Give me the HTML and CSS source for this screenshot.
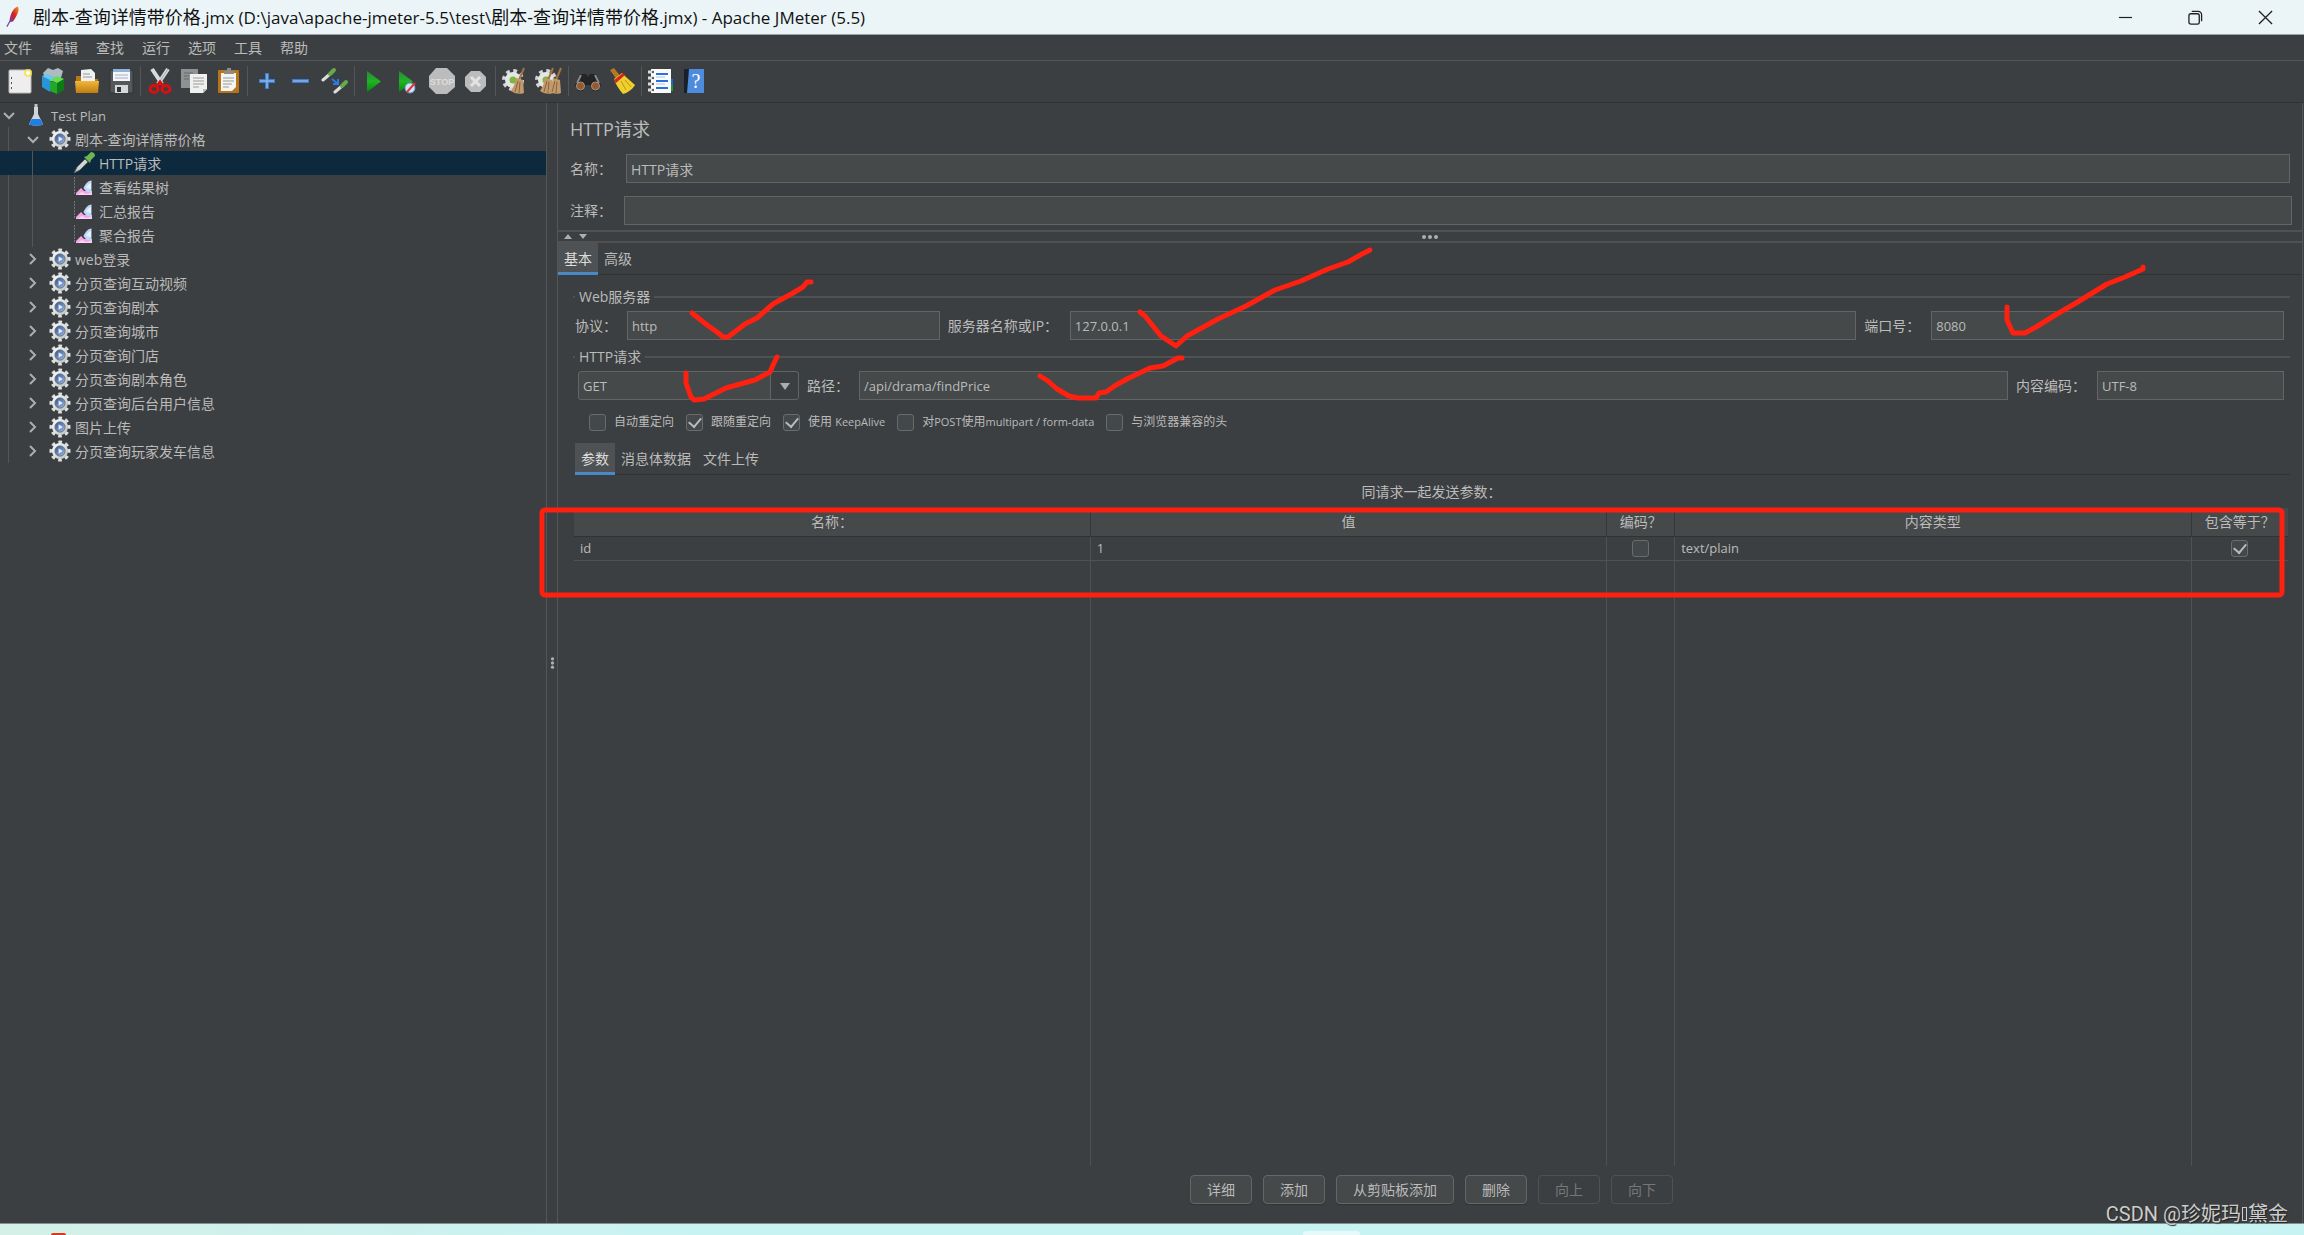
FILE: index.html
```html
<!DOCTYPE html>
<html lang="zh-CN">
<head>
<meta charset="utf-8">
<title>Apache JMeter (5.5)</title>
<link rel="stylesheet" href="styles.css">
</head>
<body>
<svg class="defs" aria-hidden="true">
  <defs>
    <linearGradient id="silver" x1="0" y1="0" x2="1" y2="1"><stop offset="0" stop-color="#fff"/><stop offset="1" stop-color="#b9bcbe"/></linearGradient>
    <linearGradient id="blue" x1="0" y1="0" x2="1" y2="1"><stop offset="0" stop-color="#2f4f8c"/><stop offset="1" stop-color="#9dbbe6"/></linearGradient>
    <linearGradient id="green" x1="0" y1="0" x2="0" y2="1"><stop offset="0" stop-color="#2b8a35"/><stop offset=".5" stop-color="#1fb325"/><stop offset="1" stop-color="#078a08"/></linearGradient>
    <linearGradient id="gold" x1="0" y1="0" x2="0" y2="1"><stop offset="0" stop-color="#f0b83c"/><stop offset="1" stop-color="#c17d10"/></linearGradient>
    <linearGradient id="feather" x1="1" y1="0" x2="0" y2="1"><stop offset="0" stop-color="#f69923"/><stop offset=".5" stop-color="#d22128"/><stop offset="1" stop-color="#6d3f9c"/></linearGradient>
  </defs>
  <symbol id="gear" viewBox="0 0 24 24">
    <circle cx="12" cy="12" r="9.5" fill="none" stroke="#dedfe0" stroke-width="4" stroke-dasharray="3.8 3.66" transform="rotate(-12 12 12)"/>
    <circle cx="12" cy="12" r="8.7" fill="url(#silver)"/>
    <circle cx="12" cy="12" r="5.6" fill="url(#blue)" stroke="#6e7680" stroke-width="1"/>
    <path d="M10.500 9l4.500 3-4.500 3z" fill="#e7effa"/>
  </symbol>
  <symbol id="chart" viewBox="0 0 22 22">
    <path d="M1.500 1v18" fill="none" stroke="#777" stroke-width="1" stroke-dasharray="2 1"/>
    <path d="M3 19v-2l5-5 3 3h8v4z" fill="#f4a6e6"/>
    <path d="M10.500 12c2-4 4-7 8-7.500V17c-3-1-6-1-8-5z" fill="#bcd8fa"/><path d="M13 12c1-3 3-4 5-5v6z" fill="#e6f1fd"/><path d="M4 19l5-3 4 2 6-1v2z" fill="#fbd3f4"/>
  </symbol>
  <symbol id="broomlet" viewBox="0 0 16 28">
    <path d="M14 1L9 13" stroke="#a0753f" stroke-width="2"/><path d="M6 11l7 2 1 13c-5 2-10 0-13-2 2-3 4-7 5-13z" fill="#c09a6c"/><path d="M8 14L5 25M10 15L9 26" stroke="#8a6338"/>
  </symbol>
  <symbol id="cog" viewBox="0 0 24 24">
    <circle cx="12" cy="12" r="9" fill="none" stroke="#d5d7d7" stroke-width="4" stroke-dasharray="3.6 3.47"/><circle cx="12" cy="12" r="8" fill="#e4e5e5"/><circle cx="12" cy="12" r="3.5" fill="#79b83a"/>
  </symbol>
  <symbol id="open" viewBox="0 0 12 12"><path d="M1 4l5 5 5-5" fill="none" stroke="#adadad" stroke-width="2"/></symbol>
  <symbol id="closed" viewBox="0 0 12 12"><path d="M3 1l5 5-5 5" fill="none" stroke="#adadad" stroke-width="2"/></symbol>
</svg>

<div class="window">
  <header class="titlebar">
    <svg class="logo" viewBox="0 0 16 26"><path d="M13 1c3 2 1 9-5 17l-4 1C4 11 8 3 13 1z" fill="url(#feather)"/><path d="M5 17l-4 7" stroke="#7b4da0" stroke-width="1.500"/></svg>
    <h1>剧本-查询详情带价格<span>.jmx (D:\java\apache-jmeter-5.5\test\</span>剧本-查询详情带价格<span>.jmx) - Apache JMeter (5.5)</span></h1>
    <button class="winbtn" aria-label="最小化"><svg viewBox="0 0 16 16"><path d="M1 8h14" stroke="#222" stroke-width="1.300"/></svg></button>
    <button class="winbtn" aria-label="还原"><svg viewBox="0 0 16 16" fill="none" stroke="#222" stroke-width="1.400"><rect x="1" y="4" width="11" height="11" rx="2"/><path d="M4 1.500h7a3.500 3.500 0 0 1 3.500 3.500v7"/></svg></button>
    <button class="winbtn" aria-label="关闭"><svg viewBox="0 0 16 16"><path d="M1 1l14 14M15 1L1 15" stroke="#222" stroke-width="1.400"/></svg></button>
  </header>

  <nav class="menubar">
    <button>文件</button><button>编辑</button><button>查找</button><button>运行</button><button>选项</button><button>工具</button><button>帮助</button>
  </nav>

  <div class="toolbar">
    <button aria-label="新建"><svg viewBox="0 0 28 28"><rect x="4" y="3" width="22" height="23" rx="1" fill="#eee" stroke="#bbb"/><path d="M6.500 10v2M6.500 15v2M6.500 20v2" stroke="#555"/><circle cx="23" cy="6" r="4" fill="#f6e34e" opacity=".85"/><circle cx="23" cy="6" r="2" fill="#fff"/></svg></button>
    <button aria-label="模板"><svg viewBox="0 0 28 28"><path d="M4 6l5-5 5 2 5-2 5 3-3 10H8z" fill="#aebcbf"/><path d="M3 9l8 3v13l-8-5z" fill="#2795d8"/><path d="M3 9l5-2 8 3-5 3z" fill="#68c6f2"/><path d="M11 14l7 2v11l-7-3z" fill="#24a82c"/><path d="M18 16l7-4v11l-7 4z" fill="#0a7a12"/><path d="M11 13l7-4 7 3-7 4z" fill="#66dc50"/></svg></button>
    <button aria-label="打开"><svg viewBox="0 0 28 28"><path d="M3 9h6l2 3h14v13H3z" fill="#b67a14"/><path d="M8 3l10-1 4 4v12H8z" fill="#eef0f2"/><path d="M10 7h7M10 10h9" stroke="#999"/><path d="M2 14h24l-1 12H3z" fill="url(#gold)"/></svg></button>
    <button aria-label="保存"><svg viewBox="0 0 28 28"><path d="M3 3h22l1 2v21H3z" fill="#55585b" stroke="#333"/><path d="M6 2h17v12H6z" fill="#f3f7fb"/><path d="M6 2h17v3H6z" fill="#8eb4dc"/><path d="M8 8h13M8 11h13" stroke="#aab"/><path d="M8 18h13v8H8z" fill="#d5d7d8"/><path d="M10 20h4v5h-4z" fill="#333"/></svg></button>
    <i class="sep"></i>
    <button aria-label="剪切"><svg viewBox="0 0 28 28"><path d="M6 2l10 15M22 2L12 17" stroke="#dadada" stroke-width="4"/><path d="M22 2L12 17" stroke="#a5a8aa" stroke-width="1"/><ellipse cx="8" cy="22" rx="4" ry="3.500" fill="none" stroke="#d90f12" stroke-width="3"/><ellipse cx="20" cy="22" rx="4" ry="3.500" fill="none" stroke="#d90f12" stroke-width="3"/><path d="M11 19l3-4 3 4" fill="none" stroke="#d90f12" stroke-width="3"/></svg></button>
    <button aria-label="复制"><svg viewBox="0 0 28 28"><path d="M1 2h17v19H1z" fill="#8f9292"/><path d="M4 6h9M4 9h5M4 12h5" stroke="#686b6b"/><path d="M10 7h17v15l-4 4H10z" fill="#f0f0ef"/><path d="M13 11h11M13 14h11M13 17h11M13 20h6" stroke="#9a9a9a"/><path d="M27 22h-4v4z" fill="#bbb"/></svg></button>
    <button aria-label="粘贴"><svg viewBox="0 0 28 28"><rect x="4" y="3" width="21" height="23" rx="1" fill="#b7741a"/><path d="M7 6h15v14l-4 4H7z" fill="#f4f4f2"/><path d="M9 11h11M9 14h11M9 17h9M9 20h6" stroke="#999"/><path d="M10 7V4h3V1h4v3h3v3z" fill="#8b8e87"/></svg></button>
    <i class="sep"></i>
    <button aria-label="展开"><svg viewBox="0 0 28 28"><path d="M14 6v16M6 14h16" stroke="#3b7bd0" stroke-width="4"/><path d="M14 7v14M7 14h14" stroke="#8cb6ea" stroke-width="1.500"/></svg></button>
    <button aria-label="折叠"><svg viewBox="0 0 28 28"><path d="M5 14h17" stroke="#3b7bd0" stroke-width="4"/><path d="M6 14h15" stroke="#8cb6ea" stroke-width="1.500"/></svg></button>
    <button aria-label="切换"><svg viewBox="0 0 28 28"><path d="M2 13l7-6M14 25l7-6" stroke="#ddd" stroke-width="3" stroke-linecap="round"/><path d="M9 7l4-4M21 19l4-4" stroke="#65a94b" stroke-width="4" stroke-linecap="round"/><path d="M11 12l6 5m0-5v5h-5" fill="none" stroke="#2d78e4" stroke-width="2"/></svg></button>
    <i class="sep"></i>
    <button aria-label="启动"><svg viewBox="0 0 28 28"><path d="M7 4l14 10.500L7 25z" fill="url(#green)"/></svg></button>
    <button aria-label="无停顿启动"><svg viewBox="0 0 28 28"><path d="M5 4l14 10.500L5 25z" fill="url(#green)"/><circle cx="16" cy="21" r="5" fill="#cfe3f8" stroke="#6b99ce"/><path d="M13 25l8-9" stroke="#d33" stroke-width="2"/></svg></button>
    <button aria-label="停止"><svg viewBox="0 0 28 28"><path d="M8 1h11l8 8v11l-8 7H8l-7-7V9z" fill="#bcbcbc"/><text x="14" y="18" class="stoptext">STOP</text></svg></button>
    <button aria-label="关闭"><svg viewBox="0 0 28 28"><path d="M9 4h9l6 6v9l-6 6H9l-6-6v-9z" fill="#bcbcbc"/><path d="M9 10l9 9M18 10l-9 9" stroke="#e3e3e3" stroke-width="3"/></svg></button>
    <i class="sep"></i>
    <button aria-label="清除"><svg viewBox="0 0 28 28"><use href="#cog" x="0" y="1" width="24" height="24"/><use href="#broomlet" x="9" y="0" width="16" height="28"/></svg></button>
    <button aria-label="清除全部"><svg viewBox="0 0 28 28"><use href="#cog" x="-1" y="1" width="24" height="24"/><use href="#broomlet" x="4" y="0" width="16" height="28"/><use href="#broomlet" x="12" y="0" width="16" height="28"/></svg></button>
    <i class="sep"></i>
    <button aria-label="搜索"><svg viewBox="0 0 28 28"><path d="M6 7h6l2 3 2-3h6l5 11-3 6h-5l-3-6h-4l-3 6H4l-3-6z" fill="#242424"/><path d="M7 8l-4 8M21 8l4 8" stroke="#888" stroke-width="2"/><circle cx="6.500" cy="19" r="4" fill="#9a5828" stroke="#999"/><circle cx="21.500" cy="19" r="4" fill="#9a5828" stroke="#999"/></svg></button>
    <button aria-label="重置搜索"><svg viewBox="0 0 28 28"><path d="M2 3l4-2 7 9-4 3z" fill="#b57921"/><path d="M6 12l8-6 4 4c3 3 6 5 9 8-3 5-8 8-12 9-4-5-7-9-9-15z" fill="#efcf2c"/><path d="M6 13l9-7 2 2-9 8z" fill="#d32421"/><path d="M13 14l5 9M17 13l6 7" stroke="#b9961a"/></svg></button>
    <i class="sep"></i>
    <button aria-label="函数助手"><svg viewBox="0 0 28 28"><path d="M22 12h4v6h-4z" fill="#1b66d8"/><path d="M22 18h4v6h-4z" fill="#1a9a2b"/><rect x="4" y="2" width="20" height="24" fill="#fafafa"/><path d="M9 7h12M9 14h12M9 21h12" stroke="#2c70dd" stroke-width="2"/><path d="M9 10h9M9 17h9" stroke="#aac6ef"/><path d="M1 5h6M1 11h6M1 17h6M1 23h6" stroke="#ddd" stroke-width="3"/><circle cx="6" cy="5" r="1" fill="#333"/><circle cx="6" cy="11" r="1" fill="#333"/><circle cx="6" cy="17" r="1" fill="#333"/><circle cx="6" cy="23" r="1" fill="#333"/></svg></button>
    <button aria-label="帮助"><svg viewBox="0 0 28 28"><path d="M3 2h20v24H3z" fill="#4f8bdd"/><path d="M3 2h5L6 26H3z" fill="#17202b"/><text x="15" y="21" class="helptext">?</text></svg></button>
  </div>

  <main class="workspace">
    <aside class="tree">
      <ul>
        <li>
          <div class="node"><svg class="twisty"><use href="#open"/></svg><svg class="icon" viewBox="0 0 22 22"><path d="M11 0v9" stroke="#bfc4c8" stroke-width="3"/><path d="M9 3h4v7l5 10c0 2-14 2-14 0L9 10z" fill="#cfd6dc"/><path d="M7 15h8l3 5c0 2-14 2-14 0z" fill="#1f7de6"/></svg><span class="latin">Test Plan</span></div>
          <ul>
            <li>
              <div class="node"><svg class="twisty"><use href="#open"/></svg><svg class="icon"><use href="#gear"/></svg><span>剧本-查询详情带价格</span></div>
              <ul>
                <li><div class="node selected"><i class="twisty"></i><svg class="icon" viewBox="0 0 22 22"><path d="M1 21l3-6 8-8 3 3-8 8z" fill="#ccd3d0" stroke="#555"/><path d="M11 5l6 6 1-3 4-4c0-3-2-4-4-4l-4 4z" fill="#6fb552"/></svg><span>HTTP请求</span></div></li>
                <li><div class="node"><i class="twisty"></i><svg class="icon"><use href="#chart"/></svg><span>查看结果树</span></div></li>
                <li><div class="node"><i class="twisty"></i><svg class="icon"><use href="#chart"/></svg><span>汇总报告</span></div></li>
                <li><div class="node"><i class="twisty"></i><svg class="icon"><use href="#chart"/></svg><span>聚合报告</span></div></li>
              </ul>
            </li>
            <li><div class="node"><svg class="twisty"><use href="#closed"/></svg><svg class="icon"><use href="#gear"/></svg><span>web登录</span></div></li>
            <li><div class="node"><svg class="twisty"><use href="#closed"/></svg><svg class="icon"><use href="#gear"/></svg><span>分页查询互动视频</span></div></li>
            <li><div class="node"><svg class="twisty"><use href="#closed"/></svg><svg class="icon"><use href="#gear"/></svg><span>分页查询剧本</span></div></li>
            <li><div class="node"><svg class="twisty"><use href="#closed"/></svg><svg class="icon"><use href="#gear"/></svg><span>分页查询城市</span></div></li>
            <li><div class="node"><svg class="twisty"><use href="#closed"/></svg><svg class="icon"><use href="#gear"/></svg><span>分页查询门店</span></div></li>
            <li><div class="node"><svg class="twisty"><use href="#closed"/></svg><svg class="icon"><use href="#gear"/></svg><span>分页查询剧本角色</span></div></li>
            <li><div class="node"><svg class="twisty"><use href="#closed"/></svg><svg class="icon"><use href="#gear"/></svg><span>分页查询后台用户信息</span></div></li>
            <li><div class="node"><svg class="twisty"><use href="#closed"/></svg><svg class="icon"><use href="#gear"/></svg><span>图片上传</span></div></li>
            <li><div class="node"><svg class="twisty"><use href="#closed"/></svg><svg class="icon"><use href="#gear"/></svg><span>分页查询玩家发车信息</span></div></li>
          </ul>
        </li>
      </ul>
    </aside>

    <div class="divider"><svg viewBox="0 0 6 14"><g fill="#adadad"><circle cx="3" cy="2" r="2"/><circle cx="3" cy="7" r="2"/><circle cx="3" cy="12" r="2"/></g></svg></div>

    <section class="editor">
      <div class="head">
        <h2>HTTP请求</h2>
        <div class="field"><label for="name">名称：</label><input id="name" class="mixed" value="HTTP请求"></div>
        <div class="field comment"><label for="comment">注释：</label><input id="comment"></div>
      </div>
      <div class="splitter">
        <svg class="arrows" viewBox="0 0 24 6"><path d="M0 5l4-5 4 5zM15 0h8l-4 5z" fill="#adadad"/></svg>
        <svg class="dots" viewBox="0 0 16 6"><g fill="#adadad"><circle cx="2" cy="3" r="2"/><circle cx="8" cy="3" r="2"/><circle cx="14" cy="3" r="2"/></g></svg>
      </div>
      <div class="tabs"><button class="on">基本</button><button>高级</button></div>

      <div class="body">
        <fieldset>
          <legend>Web服务器</legend>
          <div class="row server">
            <label for="proto">协议：</label><input id="proto" value="http">
            <label for="host">服务器名称或IP：</label><input id="host" value="127.0.0.1">
            <label for="port">端口号：</label><input id="port" value="8080">
          </div>
        </fieldset>
        <fieldset>
          <legend>HTTP请求</legend>
          <div class="row request">
            <div class="combo"><select aria-label="方法"><option>GET</option><option>POST</option></select><svg viewBox="0 0 10 8"><path d="M0 1h10L5 8z" fill="#adadad"/></svg></div>
            <label for="path">路径：</label><input id="path" value="/api/drama/findPrice">
            <label for="enc">内容编码：</label><input id="enc" value="UTF-8">
          </div>
          <div class="checks">
            <label><input type="checkbox"><span>自动重定向</span></label>
            <label><input type="checkbox" checked><span>跟随重定向</span></label>
            <label><input type="checkbox" checked><span>使用 <small>KeepAlive</small></span></label>
            <label><input type="checkbox"><span>对<small>POST</small>使用<small>multipart / form-data</small></span></label>
            <label><input type="checkbox"><span>与浏览器兼容的头</span></label>
          </div>
        </fieldset>

        <div class="tabs inner"><button class="on">参数</button><button>消息体数据</button><button>文件上传</button></div>
        <div class="caption" id="cap">同请求一起发送参数：</div>
        <div class="grid">
          <table aria-labelledby="cap">
            <colgroup><col><col><col class="c-enc"><col><col class="c-eq"></colgroup>
            <thead><tr><th>名称：</th><th>值</th><th>编码？</th><th>内容类型</th><th>包含等于？</th></tr></thead>
            <tbody>
              <tr class="data"><td>id</td><td>1</td><td class="mid"><input type="checkbox" aria-label="编码"></td><td>text/plain</td><td class="mid"><input type="checkbox" checked aria-label="包含等于"></td></tr>
              <tr class="fill"><td></td><td></td><td></td><td></td><td></td></tr>
            </tbody>
          </table>
        </div>
        <div class="actions">
          <button>详细</button><button>添加</button><button>从剪贴板添加</button><button>删除</button><button disabled>向上</button><button disabled>向下</button>
        </div>
      </div>
    </section>
  </main>
  <footer class="taskbar"><i class="app"></i><i class="pill"></i></footer>
</div>

<svg class="marks" aria-hidden="true">
  <rect x="542" y="510" width="1740" height="85" rx="3"/>
  <path d="M692 313L707 325 717 332 723 337 728 337 745 324 757 318 773 304 793 293 803 287 807 282 811 282"/>
  <path d="M1140 312L1145 316 1161 336 1176 346 1187 336 1218 319 1246 306 1275 290 1301 281 1328 269 1348 262 1362 254 1370 250"/>
  <path d="M1040 376L1048 381 1057 389 1069 396 1078 398 1096 398 1099 393 1106 392 1116 385 1129 378 1150 368 1163 366 1178 358 1182 358"/>
  <path d="M686 373L686 383 691 397 694 400 704 399 726 388 755 380 770 372 774 363 777 357"/>
  <path d="M2007 307L2007 320 2013 333 2025 333 2036 327 2057 314 2076 303 2107 284 2125 277 2143 269 2143 267"/>
</svg>
<div class="watermark">CSDN @珍妮玛<i class="missing"></i>黛金</div>
</body>
</html>
```
FILE: styles.css
```css
* { box-sizing: border-box; }

body {
  margin: 0;
  background: #3c3f41;
  color: #bbb;
  font: 14px/20px "Open Sans", "Noto Sans CJK SC", sans-serif;
}

button, input, select {
  font: inherit;
  color: inherit;
  margin: 0;
}

button {
  background: none;
  border: 0;
  padding: 0;
}

h1, h2 { margin: 0; font-weight: 400; }
ul { margin: 0; padding: 0; list-style: none; }
.defs { position: absolute; width: 0; height: 0; }

.window {
  display: flex;
  flex-direction: column;
  height: 100vh;
}

/* Title bar */
.titlebar {
  display: flex;
  align-items: center;
  height: 35px;
  padding: 0 4px 0 6px;
  background: #ebf5f8;
  border-bottom: 1px solid #9aa3a6;
  color: #111;
}
.logo { width: 14px; height: 24px; margin-right: 13px; }
.titlebar h1 { flex: 1; font-size: 18px; line-height: 34px; white-space: nowrap; }
.titlebar h1 span { font-size: 17px; }
.winbtn { width: 70px; height: 34px; }
.winbtn svg { width: 15px; height: 15px; display: block; margin: 0 auto; }

/* Menu and toolbar */
.menubar {
  display: flex;
  gap: 18px;
  height: 26px;
  padding: 0 4px;
  border-bottom: 1px solid #555;
}
.toolbar {
  display: flex;
  align-items: center;
  height: 42px;
  padding: 0 2px 2px;
  border-bottom: 1px solid #323232;
}
.toolbar button { width: 34px; height: 32px; }
.toolbar svg { display: block; width: 28px; height: 28px; margin: 0 auto; }
.sep { width: 1px; height: 30px; margin: 0 2px; background: #555; }
.stoptext { font: 700 9px "Liberation Sans", sans-serif; fill: #ddd; text-anchor: middle; }
.helptext { font: 20px "Liberation Serif", serif; fill: #fff; text-anchor: middle; }

/* Main area */
.workspace { display: flex; flex: 1; min-height: 0; }

.tree {
  width: 547px;
  flex: none;
  border-right: 1px solid #555;
  overflow: hidden;
}
.node {
  display: flex;
  align-items: center;
  height: 24px;
  white-space: nowrap;
}
.node span { padding-top: 2px; }
.latin { font-size: 13px; }
.node .twisty { width: 12px; height: 12px; margin: 0 10px 0 3px; flex: none; }
.node .icon { width: 22px; height: 22px; margin-right: 4px; flex: none; }
.node.selected { background: #0d293e; margin-left: -48px; padding-left: 48px; }
.tree ul ul { position: relative; padding-left: 24px; }
.tree ul ul::before {
  content: "";
  position: absolute;
  left: 8px;
  top: 0;
  bottom: 0;
  width: 1px;
  background: #555;
}
.tree ul ul ul::before { z-index: 1; }

.divider {
  width: 11px;
  flex: none;
  display: flex;
  align-items: center;
  justify-content: center;
  border-right: 1px solid #555;
}
.divider svg { width: 5px; height: 12px; }

.editor {
  flex: 1;
  min-width: 0;
  display: flex;
  flex-direction: column;
  margin-right: 1px;
  border-right: 1px solid #555;
}

.head { padding: 13px 12px 5px 12px; }
.head h2 { font-size: 18px; line-height: 26px; margin-bottom: 12px; }
.field { display: flex; align-items: center; margin-bottom: 13px; }
.field label { width: 56px; flex: none; }
.field input { flex: 1; }
.field.comment { margin-right: -2px; margin-bottom: 0; }
.field.comment label { width: 54px; }

input:not([type]), select {
  height: 29px;
  min-width: 0;
  padding: 0 4px;
  background: #45494a;
  border: 1px solid #646464;
  border-radius: 0;
  font-size: 13px;
  outline: 0;
}
input.mixed { font-size: 14px; }

.splitter {
  position: relative;
  display: flex;
  align-items: center;
  justify-content: center;
  height: 13px;
  border: solid #515151;
  border-width: 2px 0;
}
.arrows { position: absolute; left: 6px; width: 24px; height: 6px; }
.dots { width: 16px; height: 6px; }

.tabs {
  display: flex;
  height: 32px;
  border-bottom: 1px solid #323232;
}
.tabs button { padding: 0 6px; height: 32px; }
.tabs .on {
  background: #4e5254;
  box-shadow: inset 0 -3px #4a88c7;
  color: #ddd;
}

.body {
  flex: 1;
  min-height: 0;
  display: flex;
  flex-direction: column;
  padding: 12px 12px 19px 15px;
}

fieldset {
  margin: 0 0 7px;
  padding: 4px 6px 0 0;
  min-width: 0;
  border: 0;
  border-top: 2px solid #4e5254;
}
legend { margin-left: 2px; padding: 0 4px; line-height: 20px; }

.row { display: grid; align-items: center; }
.row label { padding-left: 8px; }
.server { grid-template-columns: 54px 313fr 130px 787fr 75px 353fr; }
.server label:first-child { padding-left: 2px; }
.request { grid-template-columns: 221px 60px 1149fr 89px 187fr; padding-left: 5px; }

.combo {
  position: relative;
}
.combo select {
  appearance: none;
  display: block;
  width: 100%;
  border-radius: 3px;
  background: linear-gradient(to left, #3c3f41 27px, #646464 27px, #646464 28px, #45494a 28px);
}
.combo svg { position: absolute; right: 9px; top: 11px; width: 10px; height: 8px; }

.checks {
  display: flex;
  gap: 12px;
  padding: 12px 0 0 16px;
  font-size: 12px;
}
.checks label { display: flex; align-items: center; gap: 8px; white-space: nowrap; }
.checks small { font-size: 11px; }

input[type="checkbox"] {
  appearance: none;
  width: 17px;
  height: 17px;
  background: #43494a;
  border: 1px solid #6b6b6b;
  border-radius: 3px;
}
input[type="checkbox"]:checked {
  display: grid;
  place-items: center;
}
input[type="checkbox"]:checked::before {
  content: "";
  width: 6px;
  height: 10px;
  margin-bottom: 3px;
  border: solid #bbb;
  border-width: 0 2px 2px 0;
  transform: rotate(40deg);
}

.tabs.inner { margin: 4px 0 7px 2px; flex: none; }
.caption { text-align: center; line-height: 20px; margin-bottom: 6px; }

.grid { flex: 1; min-height: 0; display: grid; margin: 0 2px 0 1px; }
table {
  width: 100%;
  height: 100%;
  table-layout: fixed;
  border-collapse: collapse;
}
.c-enc { width: 68px; }
.c-eq { width: 97px; }
th {
  height: 28px;
  padding: 0;
  background: #45494a;
  border-bottom: 1px solid #323232;
  font-weight: 400;
}
th + th { border-left: 1px solid #35383a; }
td { padding: 0 6px; }
td + td { border-left: 1px solid #515151; }
.data td { height: 24px; border-bottom: 1px solid #515151; font-size: 13px; }
.data .mid { padding: 0; line-height: 17px; text-align: center; }
.mid input { vertical-align: middle; }
.mid input:checked { display: inline-grid; }
.fill td { height: auto; }

.actions { display: flex; justify-content: center; gap: 11px; margin-top: 9px; }
.actions button {
  height: 29px;
  padding: 0 16px;
  background: #45494a;
  border: 1px solid #666;
  border-radius: 4px;
  box-shadow: 0 1px 1px #333;
}
.actions button:disabled {
  background: none;
  border-color: #515151;
  box-shadow: none;
  color: #777;
}

.taskbar {
  display: flex;
  justify-content: space-between;
  align-items: flex-end;
  height: 12px;
  padding: 0 944px 0 51px;
  border-top: 1px solid #7f9191;
  background: linear-gradient(to right, #d4f0e7, #c8f3f3 30%, #c8f3f3);
  overflow: hidden;
}
.app { width: 15px; height: 2px; background: #d33a22; border-radius: 8px 8px 0 0; }
.pill { width: 57px; height: 4px; background: #e6fafa; border-radius: 4px 4px 0 0; }

/* Hand-drawn annotations laid over the window */
.marks {
  position: absolute;
  inset: 0;
  width: 100%;
  height: 100%;
  pointer-events: none;
  fill: none;
  stroke: #ff2010;
  stroke-width: 5px;
  stroke-linecap: round;
  stroke-linejoin: round;
}
.watermark {
  position: absolute;
  right: 16px;
  bottom: 9px;
  color: #ccc;
  font: 20px/24px Roboto, "Noto Sans CJK SC", sans-serif;
  text-shadow: 1px 1px 1px #222;
}
.missing {
  display: inline-block;
  width: 5px;
  height: 14px;
  margin: 0 1px;
  border: 1px solid #ccc;
}
```
